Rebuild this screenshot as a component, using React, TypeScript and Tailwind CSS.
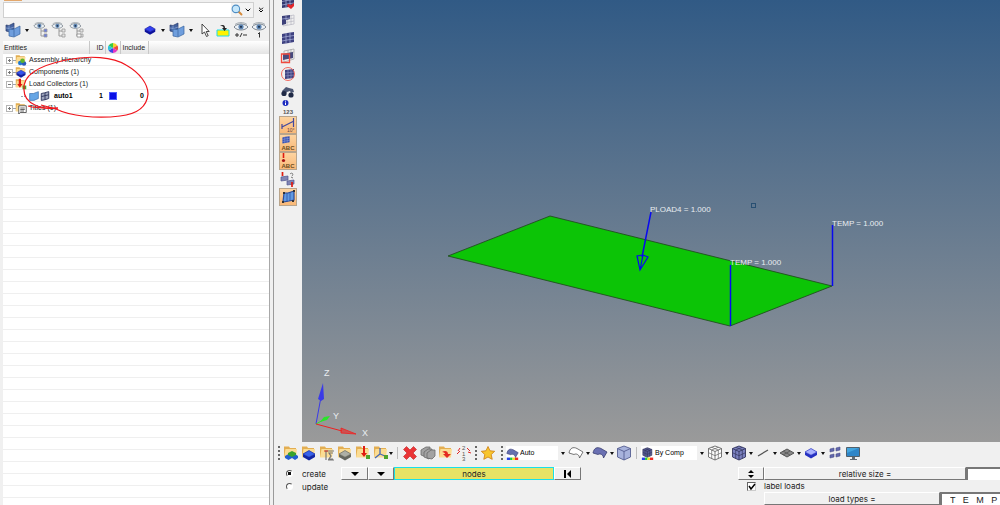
import type { ReactNode } from 'react';
import { ChevronDown, ChevronsDown } from 'lucide-react';

type IconProps = { children: ReactNode; className?: string };

const Svg = ({ children, className = 'h-4 w-4' }: IconProps) => (
  <svg viewBox="0 0 16 16" className={`shrink-0 ${className}`} fill="none">
    {children}
  </svg>
);

const Caret = ({ className = 'w-2' }: { className?: string }) => (
  <span className={`flex shrink-0 justify-center ${className}`}>
    <svg viewBox="0 0 4 3" className="h-[3px] w-1">
      <path d="M0 0h4L2 3z" fill="#111" />
    </svg>
  </span>
);

const Grip = () => (
  <svg viewBox="0 0 4 16" className="h-4 w-1 shrink-0">
    {[1, 5, 9, 13].map((y) => (
      <rect key={y} x="1" y={y} width="2" height="2" fill="#666" />
    ))}
  </svg>
);

const Divider = () => <span className="h-3 w-px shrink-0 bg-[#bdbdbd]" />;

/* Shapes shared by several icons */
const Folder = () => (
  <>
    <path d="M1 1.500h5l1 1.500h6v9H1z" fill="#e3ae52" />
    <path d="M2.500 4H14l-1 8.500H1z" fill="#fbdc93" />
  </>
);

const Plate = ({ top, side, y = 0 }: { top: string; side: string; y?: number }) => (
  <g transform={`translate(0 ${y})`}>
    <path d="M2 8v3l6 3.500 6-3.500V8l-6 3z" fill={side} />
    <path d="M8 4.500 14 8l-6 3.200L2 8z" fill={top} stroke={side} strokeWidth=".7" />
  </g>
);

const Mesh = ({ color = '#34386f' }: { color?: string }) => (
  <>
    <path d="M2 4l5-1 7-1v10l-5 1-7 1z" fill={color} />
    <path d="M2 7.500l5-1 7-1M2 11l5-1 7-1M6 3v10.500M10 2.500v10.500" stroke="#aeb4dd" strokeWidth=".7" />
  </>
);

const Sheets = () => (
  <>
    <path d="M1 3l3 .5L9 1v7L5 10l-4-1z" fill="#45639f" stroke="#28396b" strokeWidth=".7" />
    <path d="M1 6l4 .5L9 5M4 3.500v6" stroke="#9fb8e5" strokeWidth=".6" />
    <path d="M4 7l4 .5L15 4v8l-6 3-5-1z" fill="#6f9edd" stroke="#37639f" strokeWidth=".7" />
    <path d="M9 7.500v7" stroke="#37639f" strokeWidth=".7" />
  </>
);

const Cube = ({ fill, line, grid = true }: { fill: string; line: string; grid?: boolean }) => (
  <g stroke={line} strokeWidth=".9" strokeLinejoin="round">
    <path d="M8 1l6.500 2.500v8.500L8 15l-6.500-3V3.500z" fill={fill} />
    <path d="M1.500 3.500L8 6.500l6.500-3M8 6.500V15" />
    {grid && (
      <path d="M4.700 2.300l6.600 2.700v8.500M11.300 2.300L4.700 5v8.500M1.500 7.700l6.500 3 6.500-3" strokeWidth=".7" />
    )}
  </g>
);

const Eye = () => (
  <>
    <path d="M1 5c3-4 11-4 14 0-3 4-11 4-14 0z" fill="#edf2f6" stroke="#727c86" strokeWidth=".9" />
    <circle cx="8" cy="4.800" r="2.600" fill="#5f86b4" />
    <circle cx="8" cy="4.800" r="1.100" fill="#20344e" />
    <path d="M2 2.500C5 0 11 0 14 2.500" stroke="#8c959e" strokeWidth=".8" />
  </>
);

const Surface = ({ fill, line }: { fill: string; line: string }) => (
  <path d="M1 8C2 3 5 1.500 9 3.500l6 3.500-3.500 6c0-3-3-5-5.500-3.500z" fill={fill} stroke={line} strokeWidth=".8" />
);

const Rainbow = () => (
  <>
    <path d="M1 13h4v3H1z" fill="#2743e8" />
    <path d="M5 13h3v3H5z" fill="#22c942" />
    <path d="M8 13h3v3H8z" fill="#f2e120" />
    <path d="M11 13h4v3h-4z" fill="#ee2d25" />
  </>
);

const ColorWheel = () => (
  <Svg className="h-[10px] w-[10px]">
    <path d="M8 8V0a8 8 0 0 1 7 4z" fill="#f5d328" />
    <path d="M8 8l7-4a8 8 0 0 1 0 8z" fill="#f04a3a" />
    <path d="M8 8l7 4a8 8 0 0 1-7 4z" fill="#e437c4" />
    <path d="M8 8v8a8 8 0 0 1-7-4z" fill="#3c45e6" />
    <path d="M8 8l-7 4a8 8 0 0 1 0-8z" fill="#2cc4e0" />
    <path d="M8 8L1 4a8 8 0 0 1 7-4z" fill="#35c848" />
  </Svg>
);

const RedArrow = () => <path d="M8 1h2v7h2l-3 4-3-4h2z" fill="#e01b10" />;

const IconButton = ({ label, children }: { label: string; children: ReactNode }) => (
  <button type="button" aria-label={label} className="shrink-0">
    {children}
  </button>
);

/* Browser tree */
const TreeIcon = ({ kind }: { kind: string }) => (
  <Svg className="h-3 w-3">
    <Folder />
    {kind === 'assembly' && (
      <>
        <circle cx="7" cy="12" r="3" fill="#247bd2" />
        <circle cx="12" cy="12.500" r="3" fill="#2b59b8" />
        <circle cx="10" cy="9" r="3" fill="#5fb52c" />
      </>
    )}
    {kind === 'component' && <Plate top="#3553ee" side="#1220a2" y={1} />}
    {kind === 'load' && (
      <>
        <path d="M5 1h3v7h2l-3.500 5L3 8h2z" fill="#e01b10" />
        <path d="M10 10h5v5h-5z" fill="#4ea32c" />
      </>
    )}
    {kind === 'title' && (
      <>
        <path d="M5 5h10v9H7l-2 2z" fill="#fff" stroke="#333" />
        <path d="M7 8h6M7 10h6M7 12h5" stroke="#333" />
      </>
    )}
  </Svg>
);

const Expander = ({ open }: { open?: boolean }) => (
  <svg viewBox="0 0 7 7" className="h-[7px] w-[7px] shrink-0" fill="none">
    <rect x=".5" y=".5" width="6" height="6" fill="#fff" stroke="#b5b5b5" />
    <path d={open ? 'M2 3.500h3' : 'M2 3.500h3M3.500 2v3'} stroke="#777" />
  </svg>
);

const folders = [
  { label: 'Assembly Hierarchy', kind: 'assembly' },
  { label: 'Components (1)', kind: 'component' },
  { label: 'Load Collectors (1)', kind: 'load' },
  { label: 'Titles (1)', kind: 'title' },
];

const FolderRow = ({ label, kind }: { label: string; kind: string }) => (
  <tr className="h-3">
    <td colSpan={5} className="p-0">
      <div className="flex items-center pl-[3px] whitespace-nowrap">
        <Expander open={kind === 'load'} />
        <span className="w-[2px] border-t border-dotted border-gray-400" />
        <TreeIcon kind={kind} />
        <span className="pl-[2px]">{label}</span>
      </div>
    </td>
  </tr>
);

const Browser = () => (
  <aside className="relative flex w-[270px] shrink-0 flex-col border-r border-[#a8a8a8] pl-[3px] text-[7px] leading-3">
    <div className="h-[2px]">
      <div className="ml-px h-px w-[18px] bg-[#e3a76c]" />
    </div>
    <div className="flex h-4 items-center">
      <div className="flex h-full min-w-0 flex-1 items-center border border-[#d0d0d0] bg-white">
        <input aria-label="Search" className="h-full min-w-0 flex-1 px-1 outline-none" />
        <div className="flex h-full items-center bg-[#f3f3f3]">
          <IconButton label="Find">
            <Svg className="h-3 w-3">
              <path d="M10 10l4 4" stroke="#d58b3d" strokeWidth="2.500" strokeLinecap="round" />
              <circle cx="6.500" cy="6.500" r="5" fill="#c5e7fb" stroke="#4e8dc4" strokeWidth="1.400" />
            </Svg>
          </IconButton>
          <ChevronDown className="mx-px h-2 w-2" strokeWidth={3} />
        </div>
      </div>
      <ChevronsDown className="mr-1 ml-[3px] h-2 w-2" strokeWidth={3} />
    </div>

    <div className="flex h-[23px] items-center pt-px pr-[2px] pl-[2px]">
      <IconButton label="View"><Svg><Sheets /></Svg></IconButton>
      <Caret className="w-3" />
      <div className="flex gap-[2px]">
        {[0, 1, 2].map((n) => (
          <IconButton key={n} label={`Tree view ${n + 1}`}>
            <Svg>
              <g transform="scale(.8)"><Eye /></g>
              <path d="M8 7v7M8 9h3M8 14h3" stroke="#999" />
              <path d="M11 7h3v3h-3zM11 12h3v3h-3z" fill={n === 0 ? '#6a7ee0' : '#e5e5e5'} stroke="#999" strokeWidth=".8" />
              {n === 2 && <path d="M8 12h4v3H8z" fill="#fff" stroke="#888" strokeWidth=".8" />}
            </Svg>
          </IconButton>
        ))}
      </div>
      <div className="ml-auto flex items-center">
        <IconButton label="Components">
          <Svg className="h-[14px] w-[14px]"><Plate top="#3340f0" side="#0d129c" y={-1} /></Svg>
        </IconButton>
        <Caret className="w-3" />
        <IconButton label="Entities"><Svg><Sheets /></Svg></IconButton>
        <Caret className="w-3" />
        <div className="flex gap-[2px]">
          <IconButton label="Select">
            <Svg><path d="M5 2v10l2.500-2 2 4.500 1.700-.8-2-4.200h3z" fill="#fff" stroke="#333" strokeWidth=".9" /></Svg>
          </IconButton>
          <IconButton label="Isolate">
            <Svg>
              <path d="M2 8h12v6H2z" fill="#fff200" stroke="#1fdae8" />
              <path d="M5 4c3-2 5-1 5 2h2L9.500 9 7 6h1.500C8.500 4 7 4 5 4z" fill="#222" />
            </Svg>
          </IconButton>
          <IconButton label="Show or hide">
            <Svg><Eye /><path d="M2 13h4M4 11v4M7 15l2-4M10 13h4" stroke="#333" /></Svg>
          </IconButton>
          <IconButton label="Show one">
            <Svg><Eye /><path d="M8.500 10.500v5M7 12l1.500-1.500" stroke="#333" /></Svg>
          </IconButton>
        </div>
      </div>
    </div>

    <div className="flex-1 bg-white bg-[repeating-linear-gradient(to_bottom,#efefef_0px,#efefef_1px,#fff_1px,#fff_12px)]">
      <table className="w-full table-fixed border-collapse text-[#222]">
        <colgroup>
          <col className="w-[86px]" />
          <col className="w-4" />
          <col className="w-[15px]" />
          <col className="w-7" />
          <col />
        </colgroup>
        <thead>
          <tr className="h-[13px] bg-linear-to-b from-white to-[#e4e4e4] text-left">
            <th className="border-r border-[#c8c8c8] p-0 pl-px font-normal">Entities</th>
            <th className="border-r border-[#c8c8c8] p-0 pr-px text-right font-normal">ID</th>
            <th className="border-r border-[#c8c8c8] p-0 pl-[2px]" aria-label="Color"><ColorWheel /></th>
            <th className="border-r border-[#c8c8c8] p-0 pl-[2px] font-normal">Include</th>
            <th className="p-0" />
          </tr>
        </thead>
        <tbody>
          {folders.slice(0, 3).map((f) => <FolderRow key={f.kind} {...f} />)}
          <tr className="h-3 font-bold text-black">
            <td className="p-0">
              <div className="flex items-center gap-px pl-[18px]">
                <span className="mr-[3px] w-1 border-t border-dotted border-gray-400" />
                <Svg className="h-[10px] w-[10px]">
                  <path d="M1 4l6 0 8-3v11l-7 3-7 0z" fill="#67a6e5" stroke="#3167a8" />
                </Svg>
                <Svg className="h-[10px] w-[10px]">
                  <path d="M2 4l5-1 7-2v11l-6 2-6 1z" fill="#9ea5bd" stroke="#30365e" strokeWidth="1.500" />
                  <path d="M2 9l12-3M8 3v11" stroke="#30365e" strokeWidth="1.500" />
                </Svg>
                <span className="pl-[3px]">auto1</span>
              </div>
            </td>
            <td className="p-0 pr-[2px] text-right">1</td>
            <td className="p-0 pl-1"><div className="h-2 w-2 border border-[#4c5cff] bg-[#0a10e6]" /></td>
            <td className="p-0 pr-1 text-right">0</td>
            <td className="p-0" />
          </tr>
          <FolderRow {...folders[3]} />
        </tbody>
      </table>
    </div>

    {/* Hand drawn mark over the load collector */}
    <svg viewBox="0 0 160 80" className="pointer-events-none absolute top-10 left-0 h-20 w-40" fill="none">
      <path
        d="M58 68C42 70 24 64 24 50C22 34 42 25 66 20C90 15 113 17 126 25C140 33 148 44 148 54C147 66 138 74 120 76C96 79 70 76 56 69L41 65"
        stroke="#f0141c"
        strokeWidth="1.200"
      />
      <path d="M28 66c10 3 20 2 30 2" stroke="#f0141c" strokeWidth="1.200" />
    </svg>
  </aside>
);

const viewTools: { label: string; icon: ReactNode }[] = [
  { label: 'Mask', icon: <><Mesh /><path d="M8 10l3 1 3-2v3l-3 3-4-3z" fill="#e3262b" /></> },
  { label: 'Reverse mask', icon: <><path d="M3 5l11-2v9L3 14zM3 8l11-2M3 11l11-2M7 4v9M11 3v10" stroke="#bcbcc6" strokeWidth=".8" /><path d="M2 4l8-1v4L6 8v4l-4 1z" fill="#3c4079" /><path d="M2 7l8-1M6 4v4" stroke="#aeb4dd" strokeWidth=".7" /></> },
  { label: 'Unmask all', icon: <Mesh color="#3e4180" /> },
  { label: 'Mask window', icon: <><path d="M4 3l10-2v10L4 14zM8 2v4M11 1v10M4 6l10-2" stroke="#aaa" strokeWidth=".8" /><path d="M3 6l10-2v6l-10 2z" fill="#474a7c" /><path d="M1.500 6h8v8.500h-8z" stroke="#f04a3e" strokeWidth="1.300" /></> },
  { label: 'Spherical clip', icon: <><path d="M5 4l9-1v9l-9 1z" fill="#3e4180" /><path d="M5 7l9-1M5 10l9-1M8 4v9M11 4v9" stroke="#9297c8" strokeWidth=".6" /><circle cx="8" cy="8" r="6.500" stroke="#f26a60" /></> },
  { label: 'Find', icon: <><path d="M2 7l4-4 3 1 4 1 1 3-3 1-1-2-3 1-3 3z" fill="#4c5773" /><circle cx="4" cy="9.500" r="2.600" fill="#202a46" /><circle cx="11" cy="11" r="2.600" fill="#202a46" /></> },
];

const Abc = () => (
  <text x="8" y="15" textAnchor="middle" fontSize="6" fontWeight="bold" fill="#6b4a20">
    ABC
  </text>
);

const displayTools: { label: string; icon: ReactNode; active?: boolean }[] = [
  { label: 'Numbers', icon: <><circle cx="5.500" cy="4" r="3" fill="#1c2bc0" /><path d="M5.500 3.500v2.500M5.500 1.700v1" stroke="#fff" /><text x="8" y="15" textAnchor="middle" fontSize="6" fontWeight="bold" fill="#555">123</text></> },
  { label: 'Element handles', active: true, icon: <><path d="M2 10L14 4M2 7v5M13.500 1v9" stroke="#4149a0" strokeWidth="1.200" /><text x="7" y="15" fontSize="5" fill="#644">10°</text></> },
  { label: 'Load labels', active: true, icon: <><g transform="scale(.6) translate(2 0)"><Mesh color="#3550b5" /></g><Abc /></> },
  { label: 'Load handles', active: true, icon: <><path d="M3.500 0v5" stroke="#e01b10" strokeWidth="1.600" /><circle cx="3.500" cy="7.500" r="1.600" fill="#a51212" /><Abc /></> },
  { label: 'Fixed points', icon: <><path d="M1 6l7-1v4L1 10zM7 10l7-1v4l-7 1z" fill="#8185b4" stroke="#51568f" strokeWidth=".7" /><path d="M2.500 1v4M12 11v5" stroke="#e01b10" strokeWidth="1.700" /><path d="M10 3c2-2 4 0 2 2M11 6l2 1" stroke="#777" /></> },
  { label: 'Shrink', active: true, icon: <><path d="M4 4l4 0 6-2v9l-5 1-6 1z" fill="#5f99e2" stroke="#2b4c9b" strokeWidth="1.200" /><path d="M7 4v9M10 3v9" stroke="#2b4c9b" strokeWidth=".7" /><path d="M2 12h2v2H2zM12 11h2v2h-2zM3 3h2v2H3zM13 1h2v2h-2z" fill="#333" /></> },
];

const SideToolbar = () => (
  <nav className="flex w-7 shrink-0 flex-col items-center overflow-hidden">
    <div className="-mt-1.5 flex flex-col gap-[2px]">
      {viewTools.map((t) => (
        <IconButton key={t.label} label={t.label}><Svg>{t.icon}</Svg></IconButton>
      ))}
    </div>
    <div className="-mt-px flex flex-col gap-[2px]">
      {displayTools.map((t) => (
        <button
          key={t.label}
          type="button"
          aria-label={t.label}
          className={t.active ? 'bg-linear-to-b from-[#fdd4a0] to-[#f9b877] outline outline-[#b9a58c]' : ''}
        >
          <Svg>{t.icon}</Svg>
        </button>
      ))}
    </div>
  </nav>
);

const Viewport = () => (
  <main className="min-h-0 min-w-0 flex-1 bg-linear-to-b/srgb from-[#315a85] to-[#9a9a9a]">
    <svg viewBox="0 0 698 442" preserveAspectRatio="xMinYMin meet" className="h-full w-full" fontSize="8" fill="none">
      <path d="M146 256L248 216l282 70-102 40z" fill="#0cc406" stroke="#234f20" strokeWidth=".9" />
      <g stroke="#0808f0" strokeWidth="1.500">
        <path d="M349 212l-9 45M428.500 265v61M530.500 225v61" />
        <path d="M335 256l3 14 8-13-5-2zM341 255l-3 15" strokeWidth="1.200" />
      </g>
      <rect x="449.500" y="203.500" width="4" height="4" stroke="#284f72" />
      <g fill="#e9edf0">
        <text x="348" y="212">PLOAD4 = 1.000</text>
        <text x="530" y="226">TEMP = 1.000</text>
        <text x="428" y="265">TEMP = 1.000</text>
        <g fontSize="9">
          <text x="22" y="376">Z</text>
          <text x="31" y="419">Y</text>
          <text x="60" y="436">X</text>
        </g>
      </g>
      {/* Axis triad */}
      <path d="M14 424l5-27" stroke="#3a3ae8" />
      <path d="M16 399l5-16 1 16-3 2z" fill="#3a3ae8" />
      <path d="M14 424l9-5" stroke="#2ae52a" />
      <path d="M18 422l4-5 6-1-3 4z" fill="#2ae52a" />
      <path d="M14 424l26 7" stroke="#f02020" />
      <path d="M39 428l15 6-15-1z" fill="#f02020" fillOpacity=".6" stroke="#f02020" strokeWidth=".8" />
    </svg>
  </main>
);

const Combo = ({ label, value, icon, className }: { label: string; value: string; icon: ReactNode; className: string }) => (
  <div className={`relative flex h-[14px] shrink-0 items-center bg-white ${className}`}>
    <Svg className="h-[13px] w-[13px]">{icon}</Svg>
    <select aria-label={label} className="h-full min-w-0 flex-1 appearance-none pl-px text-[7px] outline-none">
      <option>{value}</option>
    </select>
    <span className="pointer-events-none absolute inset-y-0 right-0 flex w-[10px] items-center justify-center bg-[#f0f0f0]">
      <Caret />
    </span>
  </div>
);

const createTools: { label: string; icon: ReactNode }[] = [
  { label: 'Assemblies', icon: <><Folder /><path d="M2 11l3.500-2L9 11v2l-3.500 2L2 13zM9 11l3-2 3 2v2l-3 2-3-2z" fill="#235fd0" /><path d="M5 8l4-2 4 2v2l-4 2-4-2z" fill="#3aa32c" /></> },
  { label: 'Components', icon: <><Folder /><Plate top="#3762ec" side="#1226a5" y={1} /></> },
  { label: 'Properties', icon: <><Folder /><path d="M6 6h9M7 15V6M9 15h6M14 8h-4l2 3-2 3h4" stroke="#777" strokeWidth="1.200" /><path d="M5 6h4" stroke="#d32" /></> },
  { label: 'Materials', icon: <><Folder /><Plate top="#aeb0a6" side="#65675f" y={1} /></> },
  { label: 'Load collectors', icon: <><Folder /><RedArrow /><path d="M11 10h4v4h-4z" fill="#4ea32c" /></> },
  { label: 'Systems', icon: <><Folder /><path d="M7 3v6l-5 4M7 9l5 2" stroke="#4467b5" strokeWidth="1.300" /><path d="M11 10h4v4h-4z" fill="#4ea32c" /></> },
];

const editTools: { label: string; icon: ReactNode }[] = [
  { label: 'Delete', icon: <path d="M1.500 4.500l3-3L8 5l3.500-3.500 3 3L11 8l3.500 3.500-3 3L8 11l-3.500 3.500-3-3L5 8z" fill="#ea3436" stroke="#c02022" strokeWidth=".6" /> },
  { label: 'Card edit', icon: <g fill="#a2a2a2" stroke="#6a6a6a" strokeWidth=".8"><path d="M1 5l5-3h4v7l-4 3-5-2z" /><path d="M4 7l4-3h4v7l-3 3-5-2z" /><path d="M7 8l4-3h4v6l-3 3-5-1z" /></g> },
  { label: 'Organize', icon: <><Folder /><path d="M4 7c3-2 6-1 6 2h3l-4 4-4-4h2c0-1-1-2-3-2z" fill="#e42b22" /></> },
  { label: 'Renumber', icon: <g fontSize="6" fill="#555"><text x="6" y="5">2</text><text x="6" y="11">1</text><text x="6" y="16">3</text><path d="M2 6l2-3M1 9l3-3M11 3l3 3M12 7l3 1" stroke="#e02525" /></g> },
];

const meshTools: { label: string; icon: ReactNode }[] = [
  { label: 'Wireframe elements', icon: <Cube fill="#fff" line="#666" /> },
  { label: 'Shaded elements', icon: <Cube fill="#7b81c0" line="#33365f" /> },
  { label: '1D elements', icon: <path d="M3 11l10-6" stroke="#555" strokeWidth="1.300" /> },
  { label: '2D elements', icon: <><path d="M8 4l7 4-7 4-7-4z" fill="#888" stroke="#555" /><path d="M4 6l7 4M11 6l-7 4" stroke="#555" strokeWidth=".8" /></> },
  { label: '3D elements', icon: <Plate top="#a9b2ff" side="#2631c2" y={-1} /> },
];

const BottomToolbar = () => (
  <div className="flex h-[22px] items-center pl-[3px]">
    <Grip />
    <div className="ml-[2px] flex gap-[2px]">
      {createTools.map((t) => <IconButton key={t.label} label={t.label}><Svg>{t.icon}</Svg></IconButton>)}
    </div>
    <Caret className="mr-1 w-1" />
    <Divider />
    <div className="ml-1 flex gap-[2px]">
      {editTools.map((t) => <IconButton key={t.label} label={t.label}><Svg>{t.icon}</Svg></IconButton>)}
    </div>
    <div className="mx-[2px] flex items-center gap-[2px]">
      <Grip />
      <IconButton label="Favorites">
        <Svg><path d="M8 1.500l2 4.300 4.700.5-3.500 3.200 1 4.800L8 12l-4.200 2.300 1-4.800L1.300 6.300 6 5.800z" fill="#f8c62e" stroke="#d1871c" strokeWidth=".9" /></Svg>
      </IconButton>
    </div>
    <span className="ml-[2px]"><Grip /></span>
    <Combo label="Geometry color mode" value="Auto" className="ml-[2px] w-[62px]" icon={<><Surface fill="#6670b0" line="#41467c" /><Rainbow /></>} />
    <IconButton label="Wireframe geometry"><Svg><Surface fill="#fff" line="#555" /></Svg></IconButton>
    <Caret />
    <IconButton label="Shaded geometry"><Svg><Surface fill="#6a70b2" line="#393d70" /></Svg></IconButton>
    <Caret />
    <IconButton label="Transparency"><Svg><Cube fill="#a8b3dc" line="#555d91" grid={false} /></Svg></IconButton>
    <span className="mx-1 flex"><Divider /></span>
    <Combo label="Element color mode" value="By Comp" className="w-[66px]" icon={<><g transform="translate(1 0) scale(.85)"><Cube fill="#575c94" line="#2e3158" /></g><Rainbow /></>} />
    {meshTools.map((t) => (
      <div key={t.label} className="flex items-center">
        <IconButton label={t.label}><Svg>{t.icon}</Svg></IconButton>
        <Caret />
      </div>
    ))}
    <div className="flex gap-[2px]">
      <IconButton label="Shrink elements">
        <Svg><path d="M3 4l4-1v3l-4 1zM9 3l4-1v3L9 6zM3 10l4-1v3l-4 1zM9 9l4-1v3l-4 1z" fill="#6167ae" stroke="#4b4f88" strokeWidth=".6" /></Svg>
      </IconButton>
      <IconButton label="Visualization options">
        <Svg><path d="M1.500 2.500h13v9h-13z" fill="#43a5de" stroke="#52606b" /><path d="M2 8l12-5v8H2z" fill="#2f86c8" /><path d="M7 12h3v2h2v1H5v-1h2z" fill="#626b73" /></Svg>
      </IconButton>
    </div>
  </div>
);

const raised = 'border border-t-white border-l-white border-r-[#777] border-b-[#777] bg-[#f0f0f0]';
const sunken = 'border-t-2 border-l-2 border-[#777] bg-white';

const PanelButton = ({ label, children, className }: { label?: string; children: ReactNode; className: string }) => (
  <button type="button" aria-label={label} className={`flex h-[13px] items-center justify-center ${raised} ${className}`}>
    {children}
  </button>
);

const Radio = ({ label, checked }: { label: string; checked?: boolean }) => (
  <label className="flex h-[13px] items-center gap-[9px]">
    <input
      type="radio"
      name="mode"
      defaultChecked={checked}
      className="h-[7px] w-[7px] appearance-none rounded-full border border-t-[#555] border-r-white border-b-white border-l-[#555] bg-white checked:bg-[radial-gradient(#111_40%,#fff_45%)]"
    />
    {label}
  </label>
);

const BigCaret = () => (
  <svg viewBox="0 0 8 4" className="h-1 w-2"><path d="M0 0h8L4 4z" fill="#000" /></svg>
);

const LoadPanel = () => (
  <form className="flex h-[41px] justify-between overflow-hidden pt-[3px] font-[Inter,sans-serif] text-[8px] leading-3 text-[#222]">
    <div className="flex">
      <div className="w-[67px] pl-3">
        <Radio label="create" checked />
        <Radio label="update" />
      </div>
      <div className="flex">
        <PanelButton label="Entity type" className="w-[27px]"><BigCaret /></PanelButton>
        <PanelButton label="Selection method" className="w-[26px]"><BigCaret /></PanelButton>
        <button type="button" className="h-[13px] w-40 border border-[#19e0e8] bg-[#e6e365] leading-none">nodes</button>
        <PanelButton label="Reset" className="w-[27px]">
          <svg viewBox="0 0 8 8" className="h-2 w-2"><path d="M0 0h2v8H0zM7 0v8L3 4z" fill="#000" /></svg>
        </PanelButton>
      </div>
    </div>
    <div className="flex w-[262px] flex-col">
      <div className="flex">
        <PanelButton label="Switch size mode" className="w-[26px]">
          <svg viewBox="0 0 6 8" className="h-2 w-1.5"><path d="M3 0l3 3H0zM0 5h6L3 8z" fill="#000" /></svg>
        </PanelButton>
        <PanelButton className="flex-1"><label htmlFor="size">relative size =</label></PanelButton>
        <input id="size" className={`h-[13px] w-[34px] outline-none ${sunken}`} />
      </div>
      <label className="flex h-[13px] items-center pl-[9px]">
        <span className="relative mr-2 h-[9px] w-[9px]">
          <input type="checkbox" defaultChecked className="peer block h-full w-full appearance-none border border-t-[#666] border-r-[#ccc] border-b-[#ccc] border-l-[#666] bg-white" />
          <svg viewBox="0 0 9 9" className="pointer-events-none absolute inset-0 hidden h-full w-full peer-checked:block" fill="none">
            <path d="M2 4l2 3 4-5" stroke="#000" strokeWidth="1.500" />
          </svg>
        </span>
        label loads
      </label>
      <div className="flex pl-[26px]">
        <PanelButton className="flex-1"><label htmlFor="types">load types =</label></PanelButton>
        <input id="types" defaultValue="T   E   M   P" className={`h-[13px] w-[60px] pl-2 font-['Liberation_Sans',sans-serif] text-[9px] outline-none ${sunken}`} />
      </div>
    </div>
  </form>
);

const App = () => (
  <div className="flex h-screen overflow-hidden bg-[#f0f0f0] font-['Liberation_Sans',Arial,sans-serif]">
    <Browser />
    <div className="ml-[3px] flex min-w-0 flex-1 flex-col border-l border-[#9a9a9a]">
      <div className="flex min-h-0 flex-1">
        <SideToolbar />
        <Viewport />
      </div>
      <BottomToolbar />
      <LoadPanel />
    </div>
  </div>
);

export default App;
